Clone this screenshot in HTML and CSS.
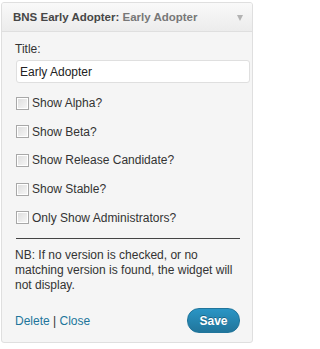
FILE: index.html
```html
<!DOCTYPE html>
<html>
<head>
<meta charset="utf-8">
<link rel="stylesheet" href="styles.css">
</head>
<body>
<div class="widget">
  <div class="widget-top">
    <h4 class="widget-title">BNS Early Adopter: <span class="in-title">Early Adopter</span></h4>
    <span class="arrow"></span>
  </div>
  <div class="widget-inside">
    <p class="field-title"><label>Title:</label><input class="widefat" type="text" value="Early Adopter"></p>
    <p class="check"><span class="box"></span><label>Show Alpha?</label></p>
    <p class="check"><span class="box"></span><label>Show Beta?</label></p>
    <p class="check"><span class="box"></span><label>Show Release Candidate?</label></p>
    <p class="check"><span class="box"></span><label>Show Stable?</label></p>
    <p class="check"><span class="box"></span><label>Only Show Administrators?</label></p>
    <div class="rule"></div>
    <p class="note">NB: If no version is checked, or no matching version is found, the widget will not display.</p>
    <div class="controls">
      <div class="links"><a href="#">Delete</a> | <a href="#">Close</a></div>
      <button class="save" type="button">Save</button>
    </div>
  </div>
</div>
</body>
</html>
```
FILE: styles.css
```css
html, body {
  margin: 0;
  padding: 0;
  background: #ffffff;
}
body {
  font-family: "Liberation Sans", Arial, sans-serif;
  font-size: 12px;
  color: #333333;
  padding: 2px 1px 0 1px;
}
.widget {
  width: 250px;
  border: 1px solid #dfdfdf;
  border-radius: 3px;
  background: #f5f5f5;
  overflow: hidden;
}
.widget-top {
  height: 28px;
  display: flex;
  align-items: center;
  justify-content: space-between;
  padding: 0 9px 0 11px;
  background: linear-gradient(to bottom, #f9f9f9, #ececec);
  border-bottom: 1px solid #dfdfdf;
}
.widget-title {
  margin: 0;
  font-size: 11.5px;
  font-weight: bold;
  color: #464646;
  white-space: nowrap;
  line-height: 16px;
}
.in-title {
  color: #777777;
}
.arrow {
  width: 0;
  height: 0;
  border-left: 3.5px solid transparent;
  border-right: 3.5px solid transparent;
  border-top: 6px solid #b3b3b3;
  margin-top: 2px;
}
.widget-inside {
  padding: 9px 12px 9px 13px;
}
.field-title {
  margin: 0 0 12px 0;
}
.field-title label {
  display: block;
  line-height: 16px;
}
.widefat {
  display: block;
  box-sizing: border-box;
  width: 234px;
  height: 23px;
  margin: 3px 0 0 1px;
  padding: 2px 3px;
  border: 1px solid #dfdfdf;
  border-radius: 3px;
  background: #ffffff;
  font-family: "Liberation Sans", Arial, sans-serif;
  font-size: 12px;
  color: #222222;
  outline: none;
}
.check {
  display: flex;
  align-items: center;
  margin: 0 0 12.7px 0;
  height: 16px;
}
.box {
  box-sizing: border-box;
  width: 13px;
  height: 13px;
  margin: 0 3px 0 1px;
  border: 1px solid #a8a8a8;
  background: linear-gradient(to bottom right, #dcdcdc, #f8f8f8);
  box-shadow: inset 0 0 0 1px #ffffff;
}
.rule {
  height: 1px;
  background: #444444;
  margin: 4px 0 0 1px;
}
.note {
  margin: 9px 0 0 0;
  line-height: 15px;
  color: #333333;
}
.controls {
  display: flex;
  justify-content: space-between;
  align-items: center;
  margin-top: 15px;
}
.links {
  color: #333333;
  line-height: 16px;
}
.links a {
  color: #21759b;
  text-decoration: none;
}
.save {
  width: 53px;
  height: 25px;
  border: 1px solid #21759b;
  border-radius: 12px;
  background: linear-gradient(to bottom, #2a95c5, #21759b);
  color: #ffffff;
  font-family: "Liberation Sans", Arial, sans-serif;
  font-size: 12px;
  font-weight: bold;
  padding: 0;
  text-shadow: 0 -1px 0 rgba(0,0,0,0.3);
}
```
